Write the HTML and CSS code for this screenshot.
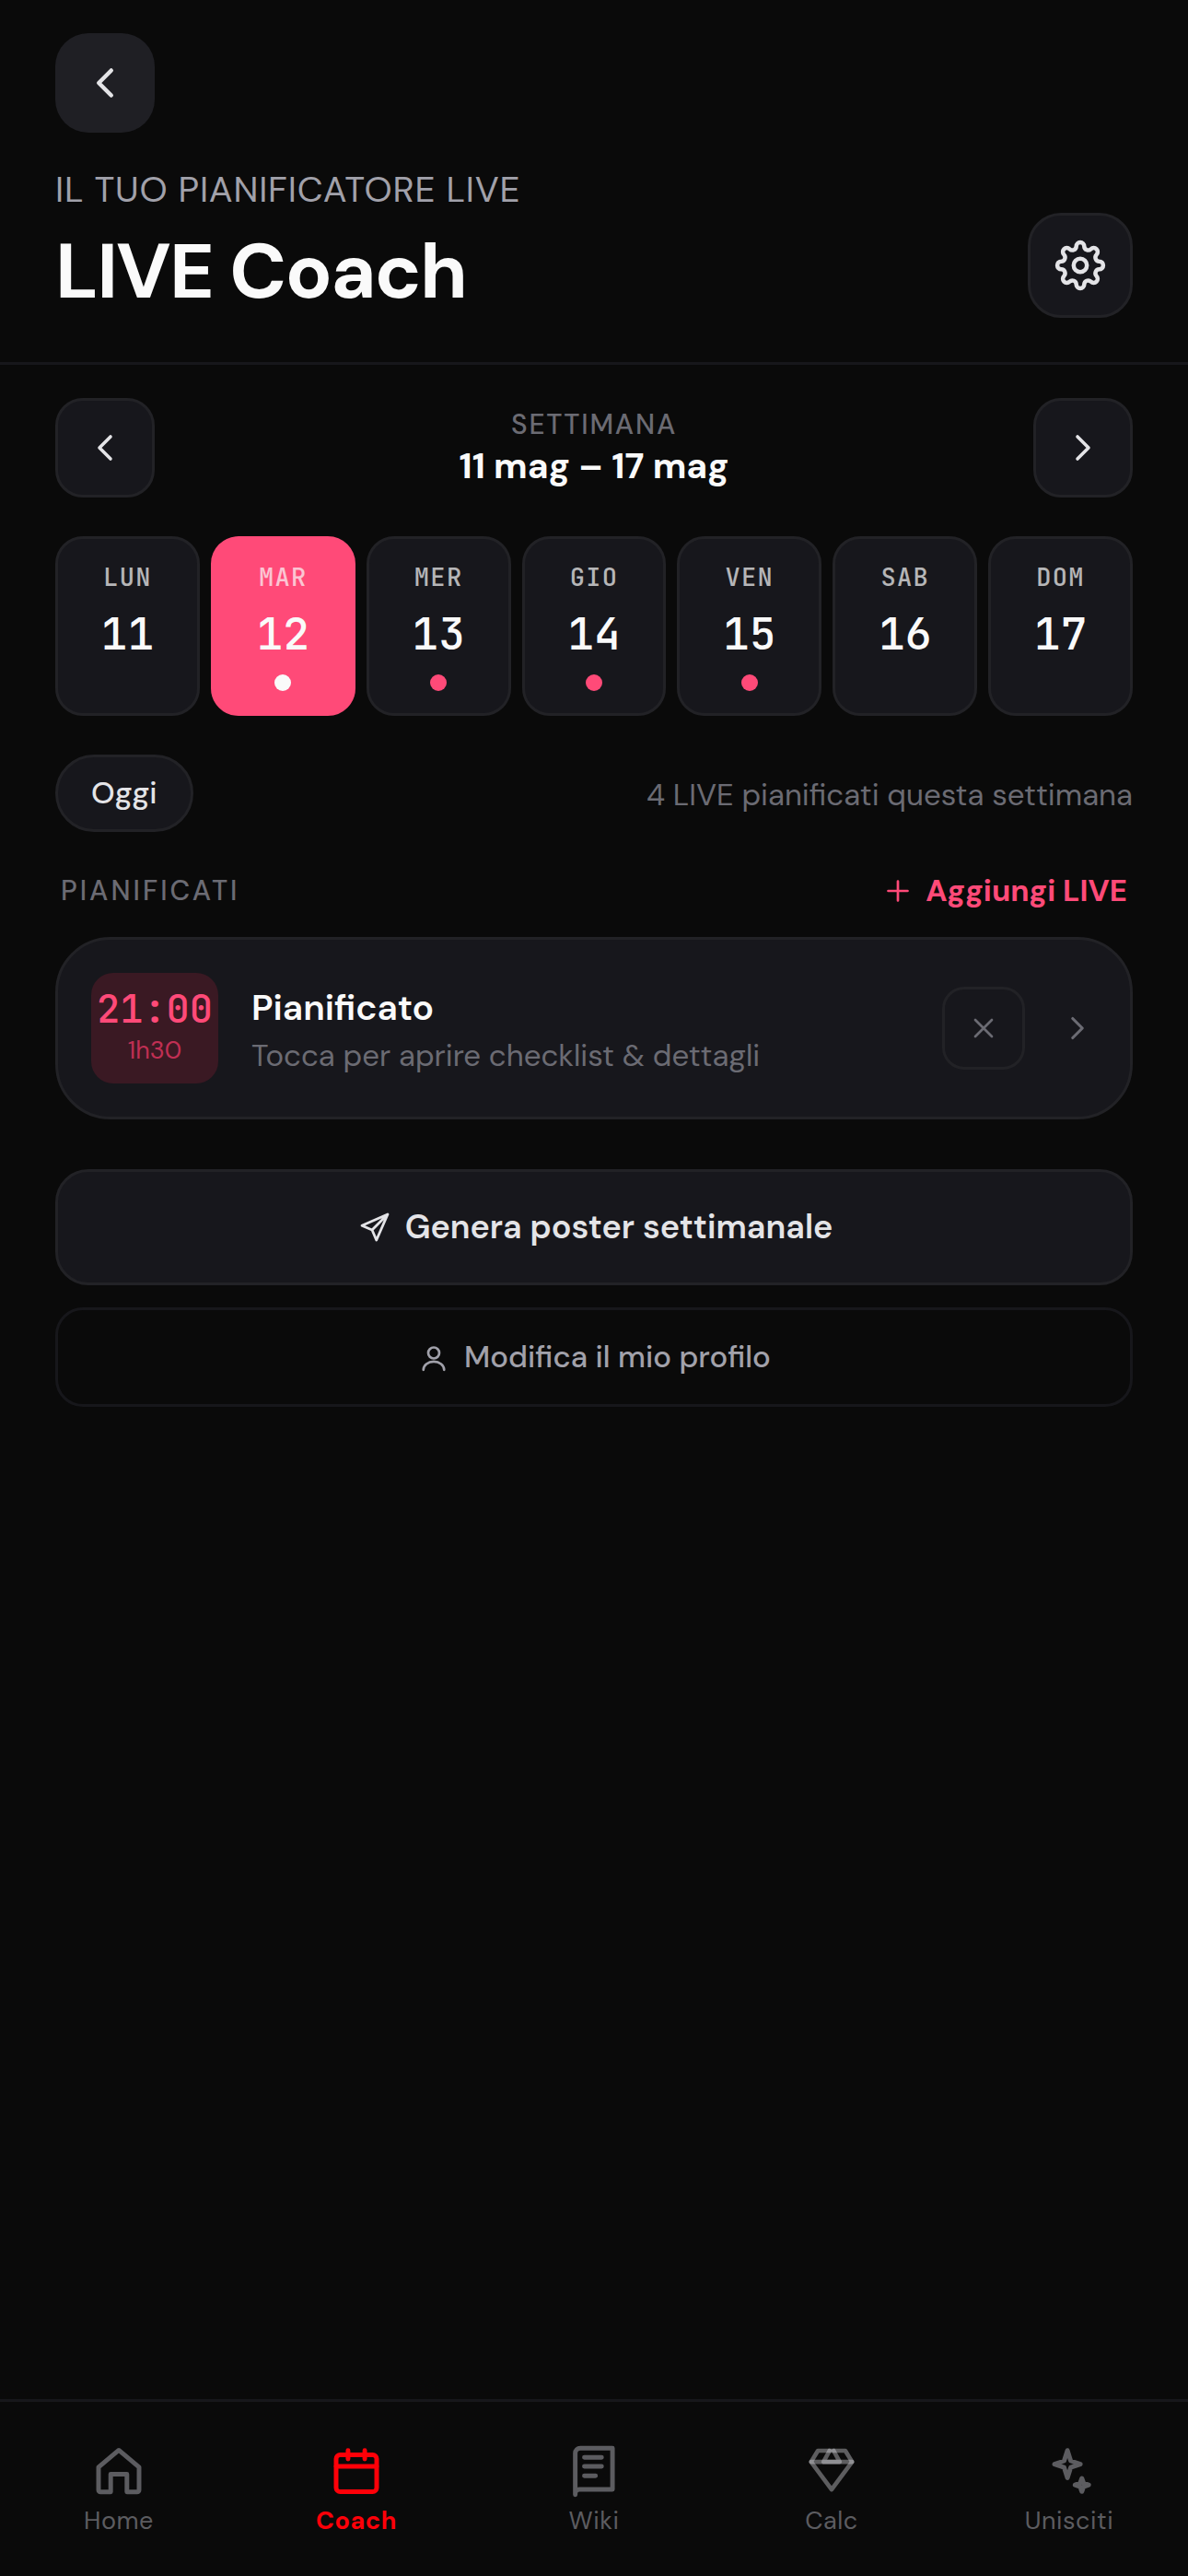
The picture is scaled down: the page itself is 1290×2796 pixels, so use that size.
FILE: index.html
```html
<!DOCTYPE html>
<html lang="it">
<head>
<meta charset="utf-8">
<meta name="viewport" content="width=device-width, initial-scale=1">
<title>LIVE Coach</title>
<link rel="stylesheet" href="styles.css">
</head>
<body>
<header class="header">
  <button class="icon-btn icon-btn-back" type="button" aria-label="Indietro">
    <svg class="icon-54" viewBox="0 0 24 24" stroke-width="2"><path d="M15 6 9 12l6 6"/></svg>
  </button>
  <div class="header-row">
    <div class="header-text">
      <p class="eyebrow">IL TUO PIANIFICATORE LIVE</p>
      <h1 class="title">LIVE Coach</h1>
    </div>
    <button class="icon-btn icon-btn-settings" type="button" aria-label="Impostazioni">
      <svg class="icon-60" viewBox="-30 -30 60 60" stroke-width="4.5"><circle r="7.2"/><path d="M-4.3-20.64A4.3 4.3 0 0 1 4.3-20.64 4.3 4.3 0 0 0 11.55-17.64 4.3 4.3 0 0 1 17.64-11.55 4.3 4.3 0 0 0 20.64-4.3 4.3 4.3 0 0 1 20.64 4.3 4.3 4.3 0 0 0 17.64 11.55 4.3 4.3 0 0 1 11.55 17.64 4.3 4.3 0 0 0 4.3 20.64 4.3 4.3 0 0 1-4.3 20.64 4.3 4.3 0 0 0-11.55 17.64 4.3 4.3 0 0 1-17.64 11.55 4.3 4.3 0 0 0-20.64 4.3 4.3 4.3 0 0 1-20.64-4.3 4.3 4.3 0 0 0-17.64-11.55 4.3 4.3 0 0 1-11.55-17.64 4.3 4.3 0 0 0-4.3-20.64Z"/></svg>
    </button>
  </div>
</header>

<main class="main">
  <div class="week">
    <button class="icon-btn" type="button" aria-label="Settimana precedente">
      <svg class="icon-48" viewBox="0 0 24 24" stroke-width="1.8"><path d="M15 6 9 12l6 6"/></svg>
    </button>
    <div class="week-text">
      <span class="week-label">SETTIMANA</span>
      <strong class="week-range">11 mag – 17 mag</strong>
    </div>
    <button class="icon-btn" type="button" aria-label="Settimana successiva">
      <svg class="icon-48" viewBox="0 0 24 24" stroke-width="1.8"><path d="m9 6 6 6-6 6"/></svg>
    </button>
  </div>

  <div class="days">
    <button class="day" type="button"><span class="day-name">LUN</span><span class="day-num">11</span></button>
    <button class="day day-on" type="button" aria-pressed="true"><span class="day-name">MAR</span><span class="day-num">12</span><span class="dot"></span></button>
    <button class="day" type="button"><span class="day-name">MER</span><span class="day-num">13</span><span class="dot"></span></button>
    <button class="day" type="button"><span class="day-name">GIO</span><span class="day-num">14</span><span class="dot"></span></button>
    <button class="day" type="button"><span class="day-name">VEN</span><span class="day-num">15</span><span class="dot"></span></button>
    <button class="day" type="button"><span class="day-name">SAB</span><span class="day-num">16</span></button>
    <button class="day" type="button"><span class="day-name">DOM</span><span class="day-num">17</span></button>
  </div>

  <div class="summary">
    <button class="pill" type="button">Oggi</button>
    <p class="count">4 LIVE pianificati questa settimana</p>
  </div>

  <section>
    <div class="section-head">
      <h2 class="section-title">PIANIFICATI</h2>
      <button class="add" type="button">
        <svg class="icon-36" viewBox="0 0 24 24" stroke-width="1.8"><path d="M12 5v14M5 12h14"/></svg>
        Aggiungi LIVE
      </button>
    </div>
    <article class="card">
      <div class="time">
        <span class="time-start">21:00</span>
        <span class="time-length">1h30</span>
      </div>
      <div class="card-text">
        <h3 class="card-title">Pianificato</h3>
        <p class="card-note">Tocca per aprire checklist &amp; dettagli</p>
      </div>
      <button class="remove" type="button" aria-label="Rimuovi">
        <svg class="icon-36" viewBox="0 0 24 24" stroke-width="1.8"><path d="m6 6 12 12M18 6 6 18"/></svg>
      </button>
      <button class="open" type="button" aria-label="Apri">
        <svg class="icon-42" viewBox="0 0 24 24" stroke-width="1.8"><path d="m9 6 6 6-6 6"/></svg>
      </button>
    </article>
  </section>

  <div class="actions">
    <button class="action" type="button">
      <svg class="icon-42" viewBox="0 0 24 24" stroke-width="1.6"><path d="M20 4 4 11l6.3 2.7L13 20ZM20 4l-9.7 9.7"/></svg>
      Genera poster settimanale
    </button>
    <button class="action action-quiet" type="button">
      <svg class="icon-36" viewBox="0 0 24 24" stroke-width="1.8"><circle cx="12" cy="9" r="4"/><path d="M4.5 21.2a7.5 6 0 0 1 15 0"/></svg>
      Modifica il mio profilo
    </button>
  </div>
</main>

<nav class="nav">
  <a class="tab" href="#home">
    <svg class="icon-66" viewBox="0 0 24 24" stroke-width="1.8"><path d="M4 10.5 12 3.8l8 6.7v9a.8.8 0 0 1-.8.8h-4v-7H8.800v7h-4a.8.8 0 0 1-.8-.8Z"/></svg>
    <span>Home</span>
  </a>
  <a class="tab tab-on" href="#coach" aria-current="page">
    <svg class="icon-66" viewBox="0 0 24 24" stroke-width="1.8"><rect x="4" y="5.600" width="16" height="14.600" rx="1.600"/><path d="M4 10.200h16M8.700 3.900v3.400M15.300 3.900v3.400"/></svg>
    <span>Coach</span>
  </a>
  <a class="tab" href="#wiki">
    <svg class="icon-66" viewBox="0 0 24 24" stroke-width="1.8"><path d="M4.600 21.400V5a2 2 0 0 1 2-2h12.700v16.300H6.200a1.600 1.600 0 0 0-1.600 1.600M8.200 6.600h6.800M8.200 10.200h6.800M8.200 13.900h4.400"/></svg>
    <span>Wiki</span>
  </a>
  <a class="tab" href="#calc">
    <svg class="icon-66 gem" viewBox="0 0 24 24" stroke-width="1.7"><path d="M6.600 4h10.800L20.100 8.400 12 19.300 3.900 8.400Z"/><path d="M3.900 8.400h16.200"/><path d="M11.200 4 8.800 8.400h6.400L12.800 4"/></svg>
    <span>Calc</span>
  </a>
  <a class="tab" href="#unisciti">
    <svg class="icon-66" viewBox="0 0 24 24" stroke-width="1.8"><path d="M11.300 3.900l1.300 4.100 3.800 1.300-3.800 1.300-1.300 4.100-1.300-4.100-3.800-1.300 3.800-1.300ZM17 14.900l.7 1.900 2 .7-2 .7-.7 1.900-.7-1.900-2-.7 2-.7Z"/></svg>
    <span>Unisciti</span>
  </a>
</nav>
</body>
</html>
```
FILE: styles.css
```css
:root {
  --bg: #0a0a0a;
  --surface: #17171c;
  --line: #222226;
  --line-soft: #17171b;
  --text: #fafafa;
  --text-2: #e4e4e7;
  --muted: #a1a1aa;
  --dim: #6b6b73;
  --pink: #ff4a78;
  --sans: "DM Sans", Inter, sans-serif;
  --mono: "JetBrains Mono", "DejaVu Sans Mono", monospace;
}

* { box-sizing: border-box; }

body {
  margin: 0;
  min-height: 100vh;
  display: flex;
  flex-direction: column;
  background: var(--bg);
  color: var(--text);
  font-family: var(--sans);
}

h1, h2, h3, p { margin: 0; }

button {
  margin: 0;
  padding: 0;
  border: 0;
  background: none;
  color: inherit;
  font: inherit;
}

svg {
  display: block;
  flex: none;
  fill: none;
  stroke: currentColor;
  stroke-linecap: round;
  stroke-linejoin: round;
}

.icon-36 { width: 36px; height: 36px; }
.icon-42 { width: 42px; height: 42px; }
.icon-48 { width: 48px; height: 48px; }
.icon-54 { width: 54px; height: 54px; }
.icon-60 { width: 60px; height: 60px; }
.icon-66 { width: 66px; height: 66px; }

.header {
  padding: 36px 60px 48px;
  border-bottom: 3px solid var(--line-soft);
}

.header-row {
  display: flex;
  justify-content: space-between;
  align-items: flex-end;
  margin-top: 36px;
}

.header-text {
  display: flex;
  flex-direction: column;
  gap: 14px;
}

.eyebrow {
  font-size: 39px;
  line-height: 51px;
  letter-spacing: 0.02em;
  color: var(--muted);
}

.title {
  font-size: 84px;
  line-height: 100px;
  font-weight: 700;
  letter-spacing: -0.02em;
}

.icon-btn {
  flex: none;
  display: grid;
  place-items: center;
  width: 108px;
  height: 108px;
  border: 3px solid var(--line);
  border-radius: 30px;
  background: var(--surface);
  color: var(--text-2);
}

.icon-btn-back {
  border: 0;
  border-radius: 36px;
  background: #1f1f24;
}

.icon-btn-settings {
  width: 114px;
  height: 114px;
  border-radius: 36px;
}

.main {
  flex: 1;
  padding: 36px 60px;
}

.week {
  display: flex;
  justify-content: space-between;
  align-items: center;
}

.week-text {
  display: flex;
  flex-direction: column;
  align-items: center;
}

.week-label {
  font-size: 30px;
  line-height: 39px;
  font-weight: 500;
  letter-spacing: 0.06em;
  color: var(--dim);
}

.week-range {
  font-size: 39px;
  line-height: 51px;
  font-weight: 700;
}

.days {
  display: grid;
  grid-template-columns: repeat(7, 1fr);
  gap: 12px;
  margin-top: 42px;
}

.day {
  display: flex;
  flex-direction: column;
  align-items: center;
  height: 195px;
  padding-top: 23px;
  border: 3px solid var(--line);
  border-radius: 30px;
  background: var(--surface);
  font-family: var(--mono);
}

.day-name {
  font-size: 27px;
  line-height: 36px;
  font-weight: 500;
  letter-spacing: 0.05em;
  opacity: 0.7;
}

.day-num {
  margin-top: 12px;
  font-size: 48px;
  line-height: 63px;
  font-weight: 500;
}

.dot {
  width: 18px;
  height: 18px;
  margin-top: 13px;
  border-radius: 50%;
  background: var(--pink);
}

.day-on {
  border-color: var(--pink);
  background: var(--pink);
}

.day-on .dot { background: var(--text); }

.summary {
  display: flex;
  justify-content: space-between;
  align-items: center;
  margin-top: 42px;
}

.pill {
  padding: 18px 36px;
  border: 3px solid var(--line);
  border-radius: 42px;
  background: var(--surface);
  color: var(--text-2);
  font-size: 33px;
  line-height: 42px;
  font-weight: 500;
}

.count {
  padding-top: 3px;
  font-size: 33px;
  line-height: 42px;
  color: var(--dim);
}

.section-head {
  display: flex;
  justify-content: space-between;
  align-items: center;
  margin-top: 43px;
  padding: 0 6px;
}

.section-title {
  font-size: 30px;
  line-height: 42px;
  font-weight: 500;
  letter-spacing: 0.1em;
  color: var(--dim);
}

.add {
  display: flex;
  align-items: center;
  gap: 12px;
  color: var(--pink);
  font-size: 33px;
  line-height: 42px;
  font-weight: 700;
}

.card {
  display: flex;
  align-items: center;
  gap: 36px;
  margin-top: 29px;
  padding: 36px;
  border: 3px solid var(--line);
  border-radius: 60px;
  background: var(--surface);
}

.time {
  flex: none;
  display: flex;
  flex-direction: column;
  align-items: center;
  width: 138px;
  padding: 12px 0 18px;
  border-radius: 24px;
  background: #3a1923;
  color: var(--pink);
}

.time-start {
  font-family: var(--mono);
  font-size: 42px;
  line-height: 54px;
  font-weight: 500;
}

.time-length {
  font-size: 27px;
  line-height: 36px;
  color: #c02f53;
}

.card-text {
  flex: 1;
  display: flex;
  flex-direction: column;
  gap: 6px;
  padding-top: 3px;
}

.card-title {
  font-size: 39px;
  line-height: 51px;
  font-weight: 600;
}

.card-note {
  font-size: 33px;
  line-height: 42px;
  color: var(--dim);
}

.remove {
  display: grid;
  place-items: center;
  width: 90px;
  height: 90px;
  border: 3px solid var(--line);
  border-radius: 24px;
  color: var(--dim);
}

.open { color: var(--dim); }

.actions {
  display: flex;
  flex-direction: column;
  gap: 24px;
  margin-top: 54px;
}

.action {
  display: flex;
  justify-content: center;
  align-items: center;
  gap: 12px;
  padding: 36px;
  border: 3px solid var(--line);
  border-radius: 36px;
  background: var(--surface);
  color: var(--text-2);
  font-size: 36px;
  line-height: 48px;
  font-weight: 600;
}

.action-quiet {
  gap: 15px;
  padding: 30px;
  border-color: var(--line-soft);
  border-radius: 30px;
  background: none;
  color: var(--muted);
  font-size: 33px;
  line-height: 42px;
  font-weight: 500;
}

.nav {
  position: sticky;
  bottom: 0;
  display: grid;
  grid-template-columns: repeat(5, 1fr);
  padding: 42px 0;
  border-top: 3px solid var(--line-soft);
  background: var(--bg);
}

.tab {
  display: flex;
  flex-direction: column;
  align-items: center;
  gap: 3px;
  color: #5c5c60;
  font-size: 27px;
  line-height: 36px;
  letter-spacing: 0.02em;
  text-decoration: none;
}

.tab-on {
  color: #ff0008;
  font-weight: 700;
}

.gem { color: rgba(228, 228, 235, 0.38); }
```
